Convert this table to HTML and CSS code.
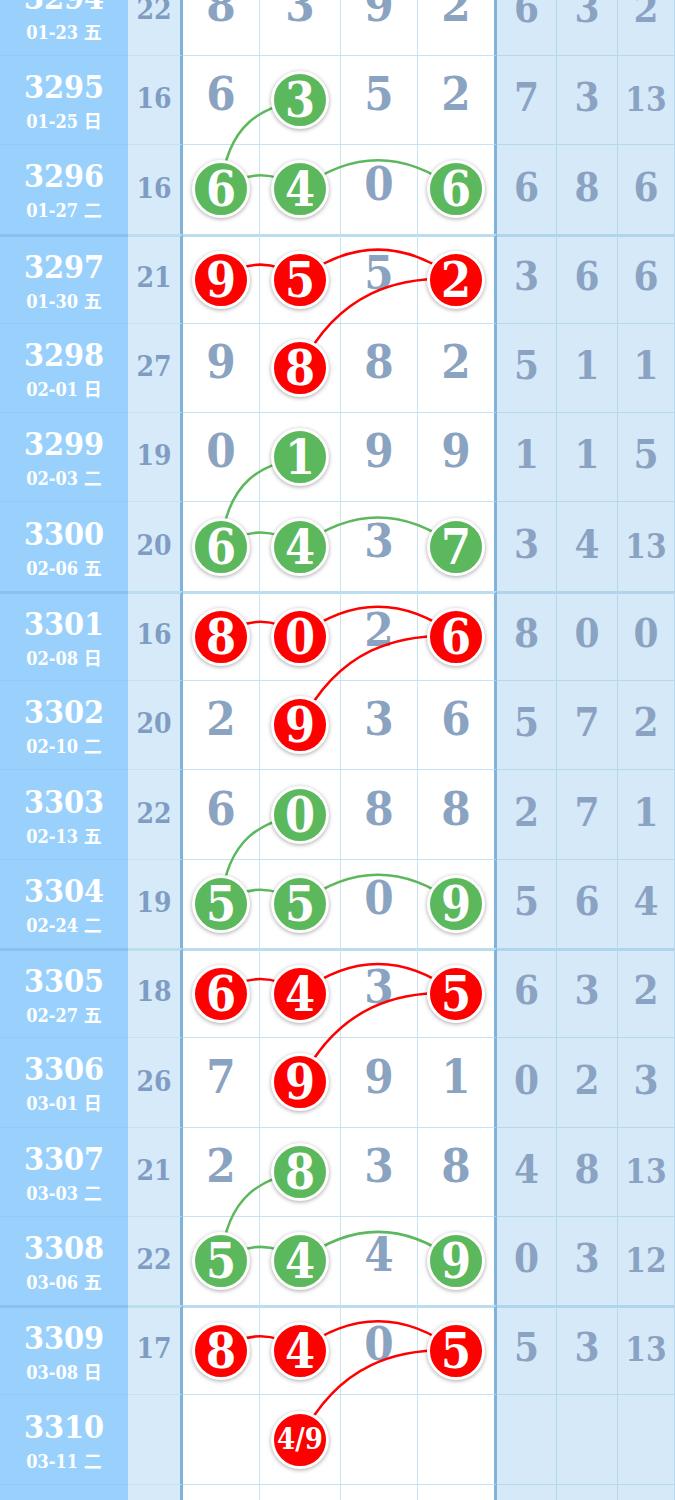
FILE: index.html
```html
<!DOCTYPE html>
<html lang="zh-CN">
  <head>
    <meta charset="UTF-8" />
    <title>走势图</title>
    <link rel="stylesheet" href="styles.css">
  </head>
  <body>
    <div class="board">
      <div class="rows">
        <div class="row">
          <div class="issue"><b>3294</b><span>01-23 五</span></div>
          <div class="sum">22</div>
          <div class="num">8</div><div class="num">3</div><div class="num">9</div><div class="num">2</div>
          <div class="tail">6</div><div class="tail">3</div><div class="tail">2</div>
        </div>
        <div class="row">
          <div class="issue"><b>3295</b><span>01-25 日</span></div>
          <div class="sum">16</div>
          <div class="num">6</div><div class="num hit"><i class="ball green">3</i></div><div class="num">5</div><div class="num">2</div>
          <div class="tail">7</div><div class="tail">3</div><div class="tail small">13</div>
        </div>
        <div class="row">
          <div class="issue"><b>3296</b><span>01-27 二</span></div>
          <div class="sum">16</div>
          <div class="num hit"><i class="ball green">6</i></div><div class="num hit"><i class="ball green">4</i></div><div class="num">0</div><div class="num hit"><i class="ball green">6</i></div>
          <div class="tail">6</div><div class="tail">8</div><div class="tail">6</div>
        </div>

        <div class="row group">
          <div class="issue"><b>3297</b><span>01-30 五</span></div>
          <div class="sum">21</div>
          <div class="num hit"><i class="ball red">9</i></div><div class="num hit"><i class="ball red">5</i></div><div class="num">5</div><div class="num hit"><i class="ball red">2</i></div>
          <div class="tail">3</div><div class="tail">6</div><div class="tail">6</div>
        </div>
        <div class="row">
          <div class="issue"><b>3298</b><span>02-01 日</span></div>
          <div class="sum">27</div>
          <div class="num">9</div><div class="num hit"><i class="ball red">8</i></div><div class="num">8</div><div class="num">2</div>
          <div class="tail">5</div><div class="tail">1</div><div class="tail">1</div>
        </div>
        <div class="row">
          <div class="issue"><b>3299</b><span>02-03 二</span></div>
          <div class="sum">19</div>
          <div class="num">0</div><div class="num hit"><i class="ball green">1</i></div><div class="num">9</div><div class="num">9</div>
          <div class="tail">1</div><div class="tail">1</div><div class="tail">5</div>
        </div>
        <div class="row">
          <div class="issue"><b>3300</b><span>02-06 五</span></div>
          <div class="sum">20</div>
          <div class="num hit"><i class="ball green">6</i></div><div class="num hit"><i class="ball green">4</i></div><div class="num">3</div><div class="num hit"><i class="ball green">7</i></div>
          <div class="tail">3</div><div class="tail">4</div><div class="tail small">13</div>
        </div>

        <div class="row group">
          <div class="issue"><b>3301</b><span>02-08 日</span></div>
          <div class="sum">16</div>
          <div class="num hit"><i class="ball red">8</i></div><div class="num hit"><i class="ball red">0</i></div><div class="num">2</div><div class="num hit"><i class="ball red">6</i></div>
          <div class="tail">8</div><div class="tail">0</div><div class="tail">0</div>
        </div>
        <div class="row">
          <div class="issue"><b>3302</b><span>02-10 二</span></div>
          <div class="sum">20</div>
          <div class="num">2</div><div class="num hit"><i class="ball red">9</i></div><div class="num">3</div><div class="num">6</div>
          <div class="tail">5</div><div class="tail">7</div><div class="tail">2</div>
        </div>
        <div class="row">
          <div class="issue"><b>3303</b><span>02-13 五</span></div>
          <div class="sum">22</div>
          <div class="num">6</div><div class="num hit"><i class="ball green">0</i></div><div class="num">8</div><div class="num">8</div>
          <div class="tail">2</div><div class="tail">7</div><div class="tail">1</div>
        </div>
        <div class="row">
          <div class="issue"><b>3304</b><span>02-24 二</span></div>
          <div class="sum">19</div>
          <div class="num hit"><i class="ball green">5</i></div><div class="num hit"><i class="ball green">5</i></div><div class="num">0</div><div class="num hit"><i class="ball green">9</i></div>
          <div class="tail">5</div><div class="tail">6</div><div class="tail">4</div>
        </div>

        <div class="row group">
          <div class="issue"><b>3305</b><span>02-27 五</span></div>
          <div class="sum">18</div>
          <div class="num hit"><i class="ball red">6</i></div><div class="num hit"><i class="ball red">4</i></div><div class="num">3</div><div class="num hit"><i class="ball red">5</i></div>
          <div class="tail">6</div><div class="tail">3</div><div class="tail">2</div>
        </div>
        <div class="row">
          <div class="issue"><b>3306</b><span>03-01 日</span></div>
          <div class="sum">26</div>
          <div class="num">7</div><div class="num hit"><i class="ball red">9</i></div><div class="num">9</div><div class="num">1</div>
          <div class="tail">0</div><div class="tail">2</div><div class="tail">3</div>
        </div>
        <div class="row">
          <div class="issue"><b>3307</b><span>03-03 二</span></div>
          <div class="sum">21</div>
          <div class="num">2</div><div class="num hit"><i class="ball green">8</i></div><div class="num">3</div><div class="num">8</div>
          <div class="tail">4</div><div class="tail">8</div><div class="tail small">13</div>
        </div>
        <div class="row">
          <div class="issue"><b>3308</b><span>03-06 五</span></div>
          <div class="sum">22</div>
          <div class="num hit"><i class="ball green">5</i></div><div class="num hit"><i class="ball green">4</i></div><div class="num">4</div><div class="num hit"><i class="ball green">9</i></div>
          <div class="tail">0</div><div class="tail">3</div><div class="tail small">12</div>
        </div>

        <div class="row group">
          <div class="issue"><b>3309</b><span>03-08 日</span></div>
          <div class="sum">17</div>
          <div class="num hit"><i class="ball red">8</i></div><div class="num hit"><i class="ball red">4</i></div><div class="num">0</div><div class="num hit"><i class="ball red">5</i></div>
          <div class="tail">5</div><div class="tail">3</div><div class="tail small">13</div>
        </div>
        <div class="row">
          <div class="issue"><b>3310</b><span>03-11 二</span></div>
          <div class="sum"></div>
          <div class="num"></div><div class="num hit"><i class="ball red guess">4/9</i></div><div class="num"></div><div class="num"></div>
          <div class="tail"></div><div class="tail"></div><div class="tail"></div>
        </div>
        <div class="row">
          <div class="issue"></div>
          <div class="sum"></div>
          <div class="num"></div><div class="num"></div><div class="num"></div><div class="num"></div>
          <div class="tail"></div><div class="tail"></div><div class="tail"></div>
        </div>
      </div>

      <!-- links between the balls, drawn over the grid but under the balls -->
      <svg class="links" width="675" height="1500" viewBox="0 0 675 1500">
        <defs>
          <g id="redLink" class="red-line">
            <path d="M221,0 Q260.5,-28 300,0" />
            <path d="M300,0 Q378,-58 456,0" />
            <path d="M456,0 C399,-2 339,12 300,89.3" />
          </g>
          <g id="greenLink" class="green-line">
            <path d="M300,0 C264,7 227,22 221,89.3" />
            <path d="M221,89.3 Q260.5,61.3 300,89.3" />
            <path d="M300,89.3 Q378,31.3 456,89.3" />
          </g>
        </defs>
        <use href="#greenLink" y="100" />
        <use href="#redLink" y="278.6" />
        <use href="#greenLink" y="457.2" />
        <use href="#redLink" y="635.8" />
        <use href="#greenLink" y="814.4" />
        <use href="#redLink" y="993" />
        <use href="#greenLink" y="1171.6" />
        <use href="#redLink" y="1350.2" />
      </svg>
    </div>
  </body>
</html>
```

FILE: styles.css
```css
body {
  margin: 0;
  background: #fff;
  font-family: "DejaVu Serif Condensed", "DejaVu Serif", "Noto Sans CJK SC", serif;
}

.board {
  position: relative;
  width: 675px;
  height: 1500px;
  overflow: hidden;
}

.rows {
  margin-top: -34.3px;
}

.row {
  display: grid;
  grid-template-columns: 128px 55px 77px 81px 77px 79px 60px 61px 1fr;
  height: 89.3px;
}

.row > div {
  box-sizing: border-box;
  display: flex;
  justify-content: center;
  align-items: flex-end;
  border-top: 1px solid #c6e1f1;
  font-weight: bold;
}

.row.group > div {
  border-top: 3px solid #bcdcef;
}

.issue {
  flex-direction: column;
  align-items: center !important;
  justify-content: center !important;
  padding-top: 4px;
  background: #99d1fc;
  color: #fff;
  border-top-color: #8fcbf5 !important;
}
.row.group > .issue {
  border-top-color: #86c3ee !important;
}
.issue b {
  font-size: 32px;
  line-height: 32px;
}
.issue span {
  margin-top: 8px;
  font-size: 18px;
  line-height: 22px;
  font-family: "DejaVu Serif Condensed", "DejaVu Serif", "Noto Sans CJK SC", sans-serif;
}

.sum {
  background: #d6eafa;
  border-right: 3px solid #80b2da;
  color: #7f9dc2;
  font-size: 28px;
  padding-bottom: 29px;
}

.num {
  background: #fff;
  border-right: 1px solid #c9e3f1;
  color: #8aa3c1;
  font-size: 47px;
  line-height: 1;
  padding-bottom: 27px;
}
.num:nth-child(6) {
  border-right: 3px solid #80b2da;
}
.num.hit {
  align-items: center;
  padding-bottom: 0;
}

.tail {
  background: #d6e9f9;
  border-right: 1px solid #b6d8ed;
  color: #8ba3c2;
  font-size: 40px;
  line-height: 1;
  padding-bottom: 27px;
}
.row > .tail {
  border-top-color: #b6d8ed;
}
.row.group > .tail {
  border-top-color: #b0d4ea;
}
.tail.small {
  font-size: 33px;
  padding-bottom: 28px;
}

.ball {
  position: relative;
  z-index: 2;
  display: flex;
  align-items: center;
  justify-content: center;
  width: 52px;
  height: 52px;
  border: 3px solid #fff;
  border-radius: 50%;
  box-shadow: 0 1px 4px rgba(0, 0, 0, 0.35);
  color: #fff;
  font-style: normal;
  font-size: 48px;
  line-height: 1;
}
.ball.red {
  background: #fe0000;
}
.ball.green {
  background: #5cb85c;
}
.ball.guess {
  font-size: 29px;
}

.links {
  position: absolute;
  top: 0;
  left: 0;
  z-index: 1;
  fill: none;
  stroke-width: 2.5;
}
.red-line {
  stroke: #f00;
}
.green-line {
  stroke: #5cb85c;
}
```
